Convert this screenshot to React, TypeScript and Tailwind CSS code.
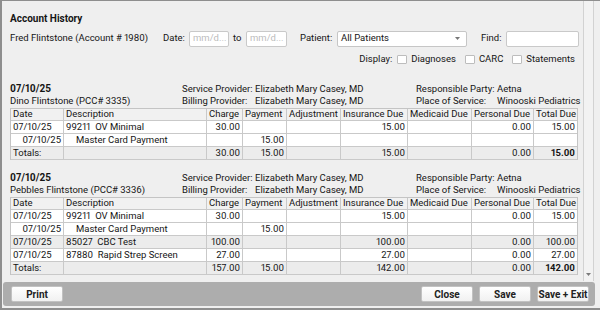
import React from "react";

type Row = {
  kind: "charge" | "payment" | "total";
  date?: string;
  code?: string;
  desc?: string;
  charge?: string;
  payment?: string;
  adj?: string;
  ins?: string;
  med?: string;
  pers?: string;
  total?: string;
  gray?: boolean;
};

const colW = ["w-[53px]", "w-[143px]", "w-[36px]", "w-[44px]", "w-[54px]", "w-[67px]", "w-[64px]", "w-[62px]", "flex-1"];
const headers = ["Date", "Description", "Charge", "Payment", "Adjustment", "Insurance Due", "Medicaid Due", "Personal Due", "Total Due"];

function Cell({ i, children, right, className = "" }: { i: number; children?: React.ReactNode; right?: boolean; className?: string }) {
  return (
    <div
      className={`${colW[i]} shrink-0 ${i < 8 ? "border-r border-[#c9c9c9]" : ""} h-full flex items-center overflow-hidden whitespace-pre ${
        right ? "justify-end pr-[2px]" : "pl-[2px]"
      } ${className}`}
    >
      {children}
    </div>
  );
}

function Table({ rows }: { rows: Row[] }) {
  return (
    <div className="mt-[1px] border border-[#c4c4c4] border-b-0">
      <div className="flex h-[12px] bg-[#f1f1f1] border-b border-[#c9c9c9]">
        {headers.map((h, i) => (
          <Cell key={h} i={i}>
            {h}
          </Cell>
        ))}
      </div>
      {rows.map((r, idx) => {
        const bg = r.kind === "total" || r.gray ? "bg-[#ececec]" : "bg-white";
        if (r.kind === "payment") {
          return (
            <div key={idx} className={`flex h-[13px] border-b border-[#c9c9c9] ${bg}`}>
              <Cell i={0} right>
                {r.date}
              </Cell>
              <Cell i={1} className="pl-[12px]">
                {r.desc}
              </Cell>
              <Cell i={2} right>{r.charge}</Cell>
              <Cell i={3} right>{r.payment}</Cell>
              <Cell i={4} right>{r.adj}</Cell>
              <Cell i={5} right>{r.ins}</Cell>
              <Cell i={6} right>{r.med}</Cell>
              <Cell i={7} right>{r.pers}</Cell>
              <Cell i={8} right>{r.total}</Cell>
            </div>
          );
        }
        return (
          <div key={idx} className={`flex h-[13px] border-b border-[#c9c9c9] ${bg}`}>
            <Cell i={0}>{r.kind === "total" ? "Totals:" : r.date}</Cell>
            <Cell i={1}>{r.code ? `${r.code}  ${r.desc}` : null}</Cell>
            <Cell i={2} right>{r.charge}</Cell>
            <Cell i={3} right>{r.payment}</Cell>
            <Cell i={4} right>{r.adj}</Cell>
            <Cell i={5} right>{r.ins}</Cell>
            <Cell i={6} right>{r.med}</Cell>
            <Cell i={7} right>{r.pers}</Cell>
            <Cell i={8} right className={r.kind === "total" ? "font-bold" : ""}>
              {r.total}
            </Cell>
          </div>
        );
      })}
    </div>
  );
}

function Section({ name, rows, className = "" }: { name: string; rows: Row[]; className?: string }) {
  return (
    <div className={className}>
      <div className="flex whitespace-nowrap">
        <div className="w-[172px] shrink-0">
          <div className="h-[12px] leading-[12px] font-bold text-[10px]">07/10/25</div>
          <div className="h-[12px] leading-[12px]">{name}</div>
        </div>
        <div className="w-[234px] shrink-0">
          <div className="flex h-[12px] leading-[12px]">
            <span className="w-[73px] shrink-0">Service Provider:</span>
            <span>Elizabeth Mary Casey, MD</span>
          </div>
          <div className="flex h-[12px] leading-[12px]">
            <span className="w-[73px] shrink-0">Billing Provider:</span>
            <span>Elizabeth Mary Casey, MD</span>
          </div>
        </div>
        <div className="flex-1">
          <div className="flex h-[12px] leading-[12px]">
            <span className="w-[81px] shrink-0">Responsible Party:</span>
            <span>Aetna</span>
          </div>
          <div className="flex h-[12px] leading-[12px]">
            <span className="w-[81px] shrink-0">Place of Service:</span>
            <span>Winooski Pediatrics</span>
          </div>
        </div>
      </div>
      <Table rows={rows} />
    </div>
  );
}

function Checkbox() {
  return <div className="w-[10px] h-[9px] bg-white border border-[#bdbdbd] rounded-[1px]" />;
}

function Btn({ label, className = "" }: { label: string; className?: string }) {
  return (
    <div
      className={`w-[52px] h-[16px] rounded-[2px] border border-[#c2c2c2] bg-gradient-to-b from-white to-[#f1f1f1] flex items-center justify-center font-bold text-[10px] text-[#222] whitespace-nowrap ${className}`}
    >
      {label}
    </div>
  );
}

const rows1: Row[] = [
  { kind: "charge", date: "07/10/25", code: "99211", desc: "OV Minimal", charge: "30.00", ins: "15.00", pers: "0.00", total: "15.00" },
  { kind: "payment", date: "07/10/25", desc: "Master Card Payment", payment: "15.00" },
  { kind: "total", charge: "30.00", payment: "15.00", ins: "15.00", pers: "0.00", total: "15.00" },
];

const rows2: Row[] = [
  { kind: "charge", date: "07/10/25", code: "99211", desc: "OV Minimal", charge: "30.00", ins: "15.00", pers: "0.00", total: "15.00" },
  { kind: "payment", date: "07/10/25", desc: "Master Card Payment", payment: "15.00" },
  { kind: "charge", gray: true, date: "07/10/25", code: "85027", desc: "CBC Test", charge: "100.00", ins: "100.00", pers: "0.00", total: "100.00" },
  { kind: "charge", date: "07/10/25", code: "87880", desc: "Rapid Strep Screen", charge: "27.00", ins: "27.00", pers: "0.00", total: "27.00" },
  { kind: "total", charge: "157.00", payment: "15.00", ins: "142.00", pers: "0.00", total: "142.00" },
];

export default function App() {
  return (
    <div className="w-[600px] h-[310px] bg-[#efefef] border-t border-l-2 border-b-2 border-[#8e8e8e] flex flex-col overflow-hidden font-['Roboto',sans-serif] text-[9.5px] text-[#151515] proportional-nums">
      <div className="flex h-[280px] pr-[6px]">
        <div className="flex-1 pl-[8px] pr-[5px] pt-[12px] overflow-hidden">
          <div className="h-[12px] leading-[12px] font-bold text-[10px]">Account History</div>
          <div className="flex items-center h-[17px] mt-[5px] whitespace-nowrap">
            <span className="w-[153px] shrink-0">Fred Flintstone (Account # 1980)</span>
            <span className="w-[26px] shrink-0">Date:</span>
            <div className="w-[40px] shrink-0 h-[16px] bg-white border border-[#c9c9c9] rounded-[2px] flex items-center pl-[3px] text-[#bcbcbc]">mm/d...</div>
            <span className="w-[17px] shrink-0 pl-[4px]">to</span>
            <div className="w-[41px] shrink-0 h-[16px] bg-white border border-[#c9c9c9] rounded-[2px] flex items-center pl-[3px] text-[#bcbcbc]">mm/d...</div>
            <span className="w-[50px] shrink-0 pl-[13px]">Patient:</span>
            <div className="w-[130px] shrink-0 h-[16px] bg-white border border-[#c6c6c6] rounded-[2px] flex items-center justify-between pl-[3px] pr-[6px]">
              <span>All Patients</span>
              <svg width="5" height="3" viewBox="0 0 5 3">
                <path d="M0 0 L5 0 L2.5 3 Z" fill="#777" />
              </svg>
            </div>
            <span className="w-[39px] shrink-0 pl-[14px]">Find:</span>
            <div className="w-[73px] shrink-0 h-[16px] bg-white border border-[#c9c9c9] rounded-[2px]" />
          </div>
          <div className="flex items-center justify-end h-[12px] mt-[6px] pr-[3px] whitespace-nowrap">
            <span>Display:</span>
            <div className="ml-[5px]"><Checkbox /></div>
            <span className="ml-[4px]">Diagnoses</span>
            <div className="ml-[9px]"><Checkbox /></div>
            <span className="ml-[4px]">CARC</span>
            <div className="ml-[9px]"><Checkbox /></div>
            <span className="ml-[4px]">Statements</span>
          </div>
          <Section name="Dino Flintstone (PCC# 3335)" rows={rows1} className="mt-[18px]" />
          <Section name="Pebbles Flintstone (PCC# 3336)" rows={rows2} className="mt-[12px]" />
        </div>
        <div className="w-[11px] shrink-0 border-l border-r border-[#d2d2d2] bg-[#f2f2f2] flex flex-col justify-end items-center pb-[5px]">
          <svg width="5" height="3" viewBox="0 0 5 3">
            <path d="M0 0 L5 0 L2.5 3 Z" fill="#7a7a7a" />
          </svg>
        </div>
      </div>
      <div className="ml-[1px] mr-[5px] mt-[1px] h-[24px] bg-[#adadad] rounded-[3px] flex items-center pl-[8px] pr-[6px]">
        <Btn label="Print" />
        <div className="flex-1" />
        <div className="flex gap-[6px]">
          <Btn label="Close" />
          <Btn label="Save" />
          <Btn label="Save + Exit" />
        </div>
      </div>
    </div>
  );
}
